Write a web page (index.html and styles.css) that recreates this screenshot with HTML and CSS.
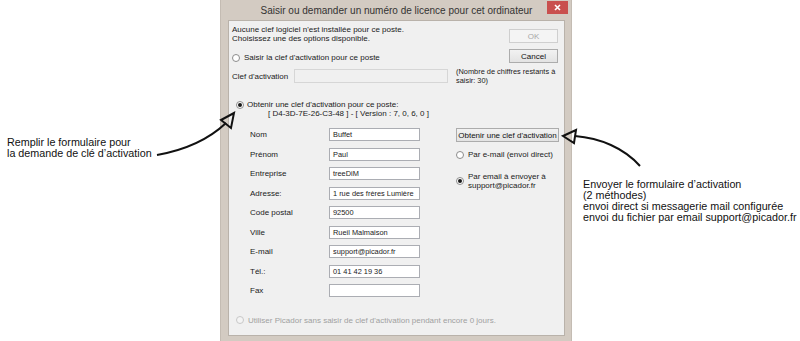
FILE: index.html
```html
<!DOCTYPE html>
<html lang="fr">
<head>
    <meta charset="UTF-8">
    <title>Licence</title>
    <link rel="stylesheet" href="styles.css">
</head>
<body>
<div class="page">
    <div class="note note-left">Remplir le formulaire pour<br>la demande de clé d’activation</div>

    <div class="window">
        <div class="titlebar">
            <span class="title">Saisir ou demander un numéro de licence pour cet ordinateur</span>
            <span class="close">
                <svg width="7" height="7" viewBox="0 0 7 7"><path d="M1 1L6 6M6 1L1 6" stroke="#fff" stroke-width="1.6"/></svg>
            </span>
        </div>
        <div class="client">
            <div class="head">
                <div class="head-left">
                    <p class="intro">Aucune clef logiciel n'est installée pour ce poste.<br>Choisissez une des options disponible.</p>
                    <div class="radio"><span class="dot"></span>Saisir la clef d'activation pour ce poste</div>
                </div>
                <div class="actions">
                    <span class="btn btn-disabled">OK</span>
                    <span class="btn">Cancel</span>
                </div>
            </div>

            <div class="key-row">
                <span class="key-label">Clef d'activation</span>
                <span class="field field-disabled"></span>
                <span class="key-note">(Nombre de chiffres restants à<br>saisir: 30)</span>
            </div>

            <div class="radio radio-get">
                <span class="dot checked"></span>
                <span>Obtenir une clef d'activation pour ce poste:<br><span class="code">[ D4-3D-7E-26-C3-48 ] - [ Version : 7, 0, 6, 0 ]</span></span>
            </div>

            <div class="request">
                <div class="form">
                    <span class="label">Nom</span><span class="field">Buffet</span>
                    <span class="label">Prénom</span><span class="field">Paul</span>
                    <span class="label">Entreprise</span><span class="field">treeDiM</span>
                    <span class="label">Adresse:</span><span class="field">1 rue des frères Lumière</span>
                    <span class="label">Code postal</span><span class="field">92500</span>
                    <span class="label">Ville</span><span class="field">Rueil Malmaison</span>
                    <span class="label">E-mail</span><span class="field">support@picador.fr</span>
                    <span class="label">Tél.:</span><span class="field">01 41 42 19 36</span>
                    <span class="label">Fax</span><span class="field"></span>
                </div>
                <div class="send">
                    <span class="btn btn-wide">Obtenir une clef d'activation</span>
                    <div class="radio"><span class="dot"></span>Par e-mail (envoi direct)</div>
                    <div class="radio radio-mail"><span class="dot checked"></span><span>Par email à envoyer à<br>support@picador.fr</span></div>
                </div>
            </div>

            <div class="radio radio-off"><span class="dot"></span>Utiliser Picador sans saisir de clef d'activation pendant encore 0 jours.</div>
        </div>
    </div>

    <div class="note note-right">Envoyer le formulaire d’activation<br>(2 méthodes)<br>envoi direct si messagerie mail configurée<br>envoi du fichier par email support@picador.fr</div>

    <svg class="arrows" width="800" height="341" viewBox="0 0 800 341">
        <path d="M157 155C185 150 207 141 226 123" fill="none" stroke="#111" stroke-width="2"/>
        <path d="M234 113L221 120L231 128Z" fill="none" stroke="#111" stroke-width="2" stroke-linejoin="miter"/>
        <path d="M575 136C600 138 624 148 640 166" fill="none" stroke="#111" stroke-width="2"/>
        <path d="M563 136L576 130L574 143Z" fill="none" stroke="#111" stroke-width="2" stroke-linejoin="miter"/>
    </svg>
</div>
</body>
</html>
```

FILE: styles.css
```css
* {
    margin: 0;
    padding: 0;
    box-sizing: border-box;
}

body {
    background: #fff;
    font-family: "Liberation Sans", Arial, sans-serif;
}

.page {
    position: relative;
    width: 800px;
    height: 341px;
    display: flex;
    overflow: hidden;
}

/* notes autour de la fenetre */
.note {
    font-size: 10.75px;
    line-height: 11px;
    color: #111;
    white-space: nowrap;
}

.note-left {
    width: 220px;
    padding: 137px 0 0 7px;
}

.note-right {
    padding: 179px 0 0 11px;
}

.arrows {
    position: absolute;
    left: 0;
    top: 0;
    pointer-events: none;
}

/* fenetre */
.window {
    flex: none;
    width: 352px;
    height: 341px;
    background: #d3cbc2;
    border-left: 1px solid #c4bcb3;
    border-right: 1px solid #c4bcb3;
    padding: 0 6px 5px 7px;
    display: flex;
    flex-direction: column;
}

.titlebar {
    height: 20px;
    display: flex;
    align-items: center;
    justify-content: center;
    position: relative;
}

.title {
    font-size: 10px;
    color: #333;
    white-space: nowrap;
}

.close {
    position: absolute;
    right: -3px;
    top: 1px;
    width: 21px;
    height: 13px;
    background: #c9504e;
    display: flex;
    align-items: center;
    justify-content: center;
}

.client {
    flex: 1;
    background: #f0f0f0;
    border: 1px solid #b9b2aa;
    padding: 4px 6px 0 3px;
    font-size: 8px;
    line-height: 9px;
    color: #1a1a1a;
    white-space: nowrap;
}

.head {
    display: flex;
    justify-content: space-between;
}

.head-left .radio {
    margin-top: 10px;
}

.actions {
    display: flex;
    flex-direction: column;
    gap: 6px;
    margin-top: 4px;
}

.btn {
    display: flex;
    align-items: center;
    justify-content: center;
    width: 49px;
    height: 14px;
    border: 1px solid #acacac;
    background: linear-gradient(#f2f2f2, #e3e3e3);
    color: #111;
}

.btn-disabled {
    border-color: #cfcfcf;
    background: #f4f4f4;
    color: #a8a8a8;
}

.btn-wide {
    width: 103px;
    margin-top: 3px;
}

.radio {
    display: flex;
    align-items: center;
    gap: 4px;
}

.dot {
    flex: none;
    width: 8px;
    height: 8px;
    border: 1px solid #8c8c8c;
    border-radius: 50%;
    background: #fff;
    display: flex;
    align-items: center;
    justify-content: center;
}

.dot.checked::after {
    content: "";
    width: 4px;
    height: 4px;
    border-radius: 50%;
    background: #1a1a1a;
}

.key-row {
    display: flex;
    align-items: center;
    margin-top: 4px;
}

.key-label {
    flex: none;
    width: 62px;
}

.field {
    flex: none;
    display: flex;
    align-items: center;
    width: 91px;
    height: 13px;
    padding-left: 3px;
    background: #fff;
    border: 1px solid #abadb3;
    font-size: 7.4px;
    overflow: hidden;
}

.field-disabled {
    width: 154px;
    height: 14px;
    background: #f0f0f0;
    border-color: #d6d6d6;
}

.key-note {
    margin-left: 8px;
    font-size: 7.4px;
}

.radio-get {
    margin: 15px 0 0 4px;
    align-items: flex-start;
    gap: 3px;
}

.radio-get .dot {
    margin-top: 1px;
}

.code {
    padding-left: 21px;
}

.request {
    display: flex;
    margin-top: 7px;
}

.form {
    display: grid;
    grid-template-columns: 79px 91px;
    grid-auto-rows: 19.5px;
    align-items: center;
    margin-left: 18px;
}

.send {
    margin-left: 36px;
    display: flex;
    flex-direction: column;
}

.send .radio {
    margin-top: 8px;
}

.send .radio-mail {
    margin-top: 13px;
}

.radio-off {
    margin: 15px 0 0 4px;
    color: #a0a0a0;
}

.radio-off .dot {
    border-color: #c8c8c8;
    background: #f4f4f4;
}
```
